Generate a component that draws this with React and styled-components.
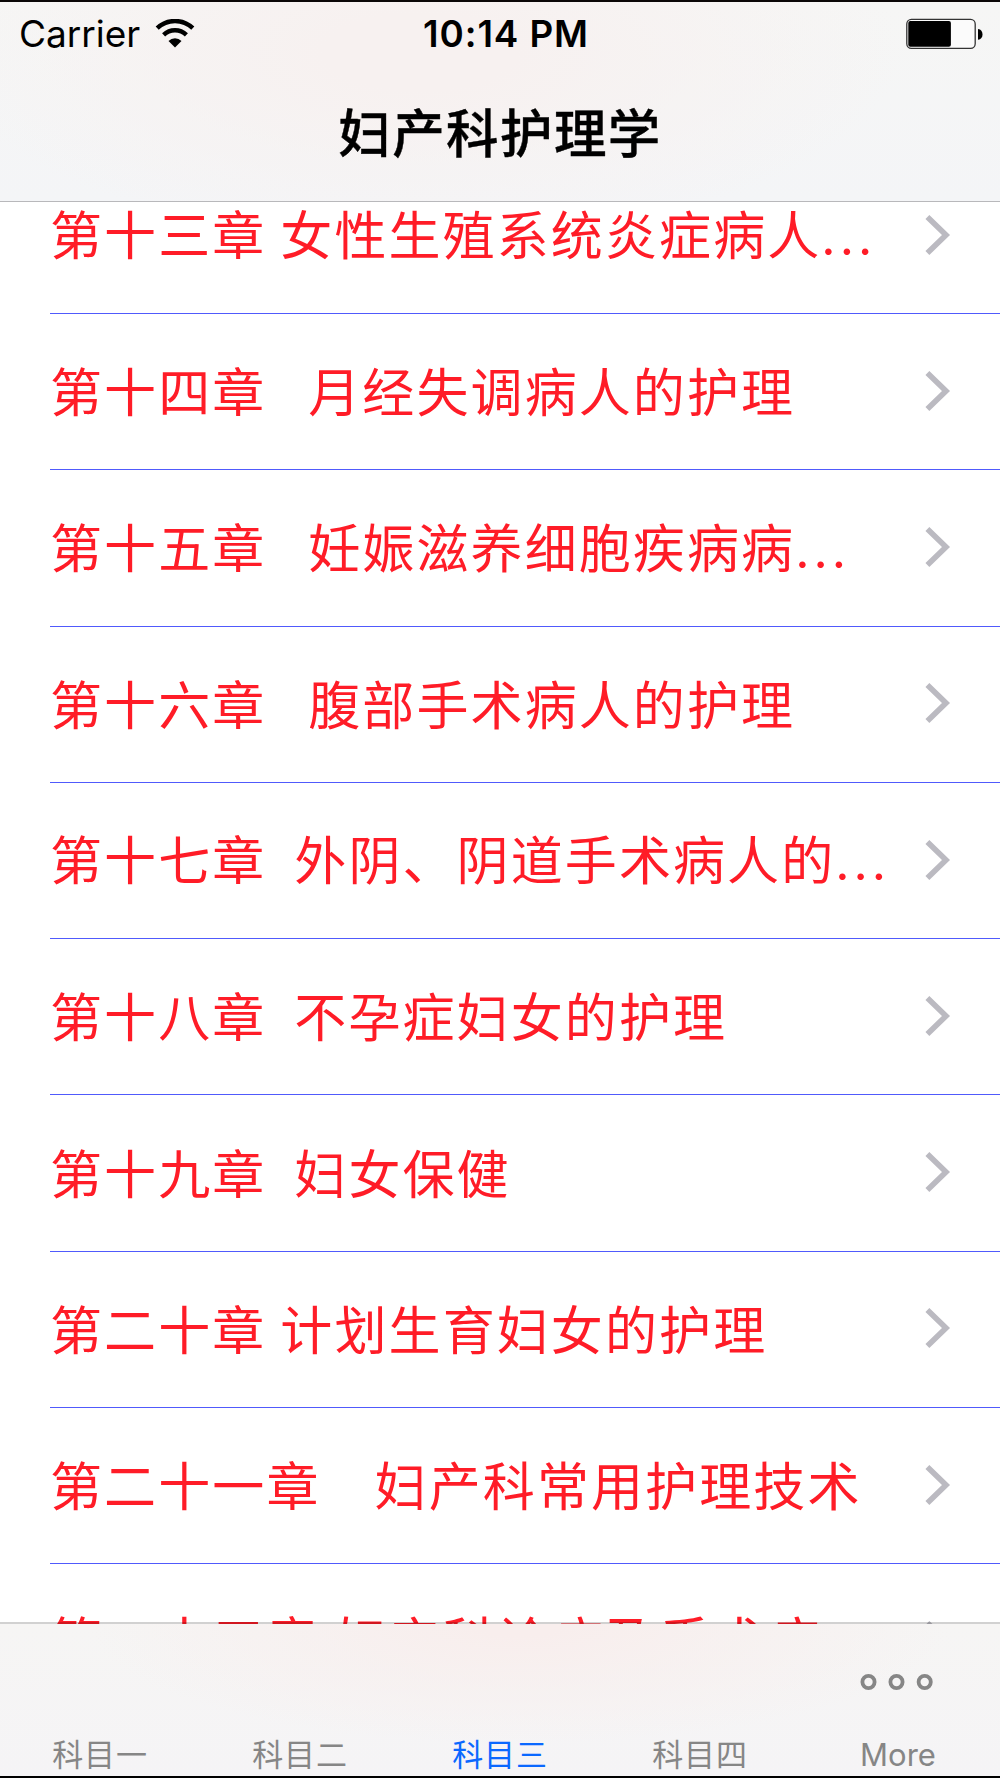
import styled, { createGlobalStyle } from "styled-components"
import { useState } from "react"

const GlobalStyle=createGlobalStyle`
    *{
        box-sizing:border-box;
    }
    body{
        margin:0;
        background-color:#fff;
        font-family:Inter,"Noto Sans CJK SC",sans-serif;
        -webkit-font-smoothing:antialiased;
    }
`
const Screen=styled.div`
    display:flex;
    flex-direction:column;
    width:1000px;
    height:1778px;
    overflow:hidden;
    border-top:2px solid #0b0707;
    border-bottom:2px solid #000;
`
const Header=styled.header`
    flex:none;
    height:200px;
    border-bottom:1px solid #b8b8bb;
    background:
        radial-gradient(ellipse 480px 190px at 42% 25%,#f7f1f0 20%,rgba(247,241,240,0) 100%),
        linear-gradient(180deg,#f6f6f5,#f4f5f7);
`
const StatusBar=styled.div`
    display:grid;
    grid-template-columns:1fr auto 1fr;
    align-items:center;
    height:64px;
    padding:0 17px 0 19px;
    font-size:37px;
    line-height:64px;
    color:#000;
`
const Carrier=styled.div`
    display:flex;
    align-items:center;
    gap:15px;
`
const Clock=styled.div`
    font-weight:600;
    font-size:36.8px;
    letter-spacing:0.9px;
    padding-left:10px;
`
const BatteryIcon=styled.svg`
    justify-self:end;
`
const Title=styled.h1`
    margin:0;
    text-align:center;
    font-family:"Noto Sans CJK SC",sans-serif;
    font-size:52.5px;
    font-weight:500;
    line-height:129px;
    letter-spacing:1.4px;
    -webkit-text-stroke:0.4px #000;
`
const ChapterList=styled.ul`
    flex:1;
    min-height:0;
    margin:0;
    padding:0;
    list-style:none;
    overflow:hidden;
    background-color:#fff;
`
/* the list is scrolled a little, so the first row starts under the header */
const ChapterRow=styled.li`
    display:flex;
    align-items:center;
    justify-content:space-between;
    height:156.25px;
    margin-left:50px;
    padding-right:49px;
    border-bottom:1px solid #505afc;
    &:first-child{
        margin-top:-44.1px;
    }
`
const ChapterName=styled.span`
    padding-bottom:3px;
    font-family:"Noto Sans CJK SC",sans-serif;
    font-size:52px;
    line-height:76px;
    letter-spacing:2.1px;
    word-spacing:0.2px;
    white-space:pre;
    color:#ff1c27;
`
const Dots=styled.span`
    margin-left:1px;
    font-family:Lato,sans-serif;
    letter-spacing:6px;
`
const TabBar=styled.nav`
    position:relative;
    display:grid;
    grid-template-columns:repeat(5,1fr);
    flex:none;
    height:154px;
    margin-top:-2px;
    border-top:2px solid rgba(0,0,0,.18);
    background:
        radial-gradient(ellipse 430px 120px at 52% 0%,#f8eeed 10%,rgba(248,238,237,0) 100%),
        linear-gradient(180deg,#f6f5f4,#f5f4f6);
    background-clip:padding-box;
`
const Tab=styled.button`
    display:flex;
    flex-direction:column;
    align-items:center;
    justify-content:flex-end;
    gap:43px;
    padding:${props=>props.$latin?"0 4px 0 0":"0 0 1px"};
    border:none;
    background:none;
    font-family:${props=>props.$latin?"Inter,sans-serif":"'Noto Sans CJK SC',sans-serif"};
    font-size:31px;
    line-height:${props=>props.$latin?"42px":"44px"};
    letter-spacing:${props=>props.$latin?"0":"0.8px"};
    color:${props=>props.$active?"#0a68ff":"#868686"};
`

const chapters=[
    {name:"第十三章 女性生殖系统炎症病人",cut:true},
    {name:"第十四章   月经失调病人的护理"},
    {name:"第十五章   妊娠滋养细胞疾病病",cut:true},
    {name:"第十六章   腹部手术病人的护理"},
    {name:"第十七章  外阴、阴道手术病人的",cut:true},
    {name:"第十八章  不孕症妇女的护理"},
    {name:"第十九章  妇女保健"},
    {name:"第二十章 计划生育妇女的护理"},
    {name:"第二十一章　妇产科常用护理技术"},
    {name:"第二十三章 妇产科诊疗及手术病",cut:true},
]
const tabs=["科目一","科目二","科目三","科目四","More"]

const Wifi=()=>(
    <svg width="40" height="30" viewBox="0 0 40 30" fill="none" stroke="#000" strokeWidth="4.4">
        <path d="M2.2 9.2A25.6 25.6 0 0 1 37.8 9.2" />
        <path d="M8.6 15.8A16.4 16.4 0 0 1 31.4 15.8" />
        <path d="M20 28.4L13.5 21.9A9.4 9.4 0 0 1 26.5 21.9Z" fill="#000" stroke="none" />
    </svg>
)
const Battery=()=>(
    <BatteryIcon width="77" height="32" viewBox="0 0 77 32">
        <rect x="0.8" y="1.4" width="68.4" height="29" rx="4.6" fill="#fbfbfb" stroke="#333" strokeWidth="1.3" />
        <rect x="2.3" y="3" width="42.6" height="25.8" rx="2" />
        <path d="M72 11C78 11.6 78 21.2 72 21.8Z" />
    </BatteryIcon>
)
const Chevron=()=>(
    <svg width="26" height="42" viewBox="0 0 26 42" fill="none" stroke="#bbbac1" strokeWidth="5.6">
        <path d="M2.4 2L21 20L2.4 38" />
    </svg>
)
const MoreIcon=()=>(
    <svg width="77" height="18" viewBox="0 0 77 18" fill="none" stroke="#868686" strokeWidth="3.8">
        <circle cx="8.5" cy="9" r="6.1" />
        <circle cx="36.5" cy="9" r="6.1" />
        <circle cx="64.7" cy="9" r="6.1" />
    </svg>
)

const App = () => {
    const [activeTab,setActiveTab]=useState("科目三")
  return (
    <Screen>
        <GlobalStyle/>
        <Header>
            <StatusBar>
                <Carrier>Carrier<Wifi/></Carrier>
                <Clock>10:14 PM</Clock>
                <Battery/>
            </StatusBar>
            <Title>妇产科护理学</Title>
        </Header>
        <ChapterList>
            {chapters.map(el=>(
                <ChapterRow key={el.name}>
                    <ChapterName>{el.name}{el.cut&&<Dots>...</Dots>}</ChapterName>
                    <Chevron/>
                </ChapterRow>
            ))}
        </ChapterList>
        <TabBar>
            {tabs.map(tab=>(
                <Tab key={tab} $latin={tab==="More"} $active={tab===activeTab} onClick={()=>setActiveTab(tab)}>
                    {tab==="More"&&<MoreIcon/>}
                    {tab}
                </Tab>
            ))}
        </TabBar>
    </Screen>
  )
}

export default App
